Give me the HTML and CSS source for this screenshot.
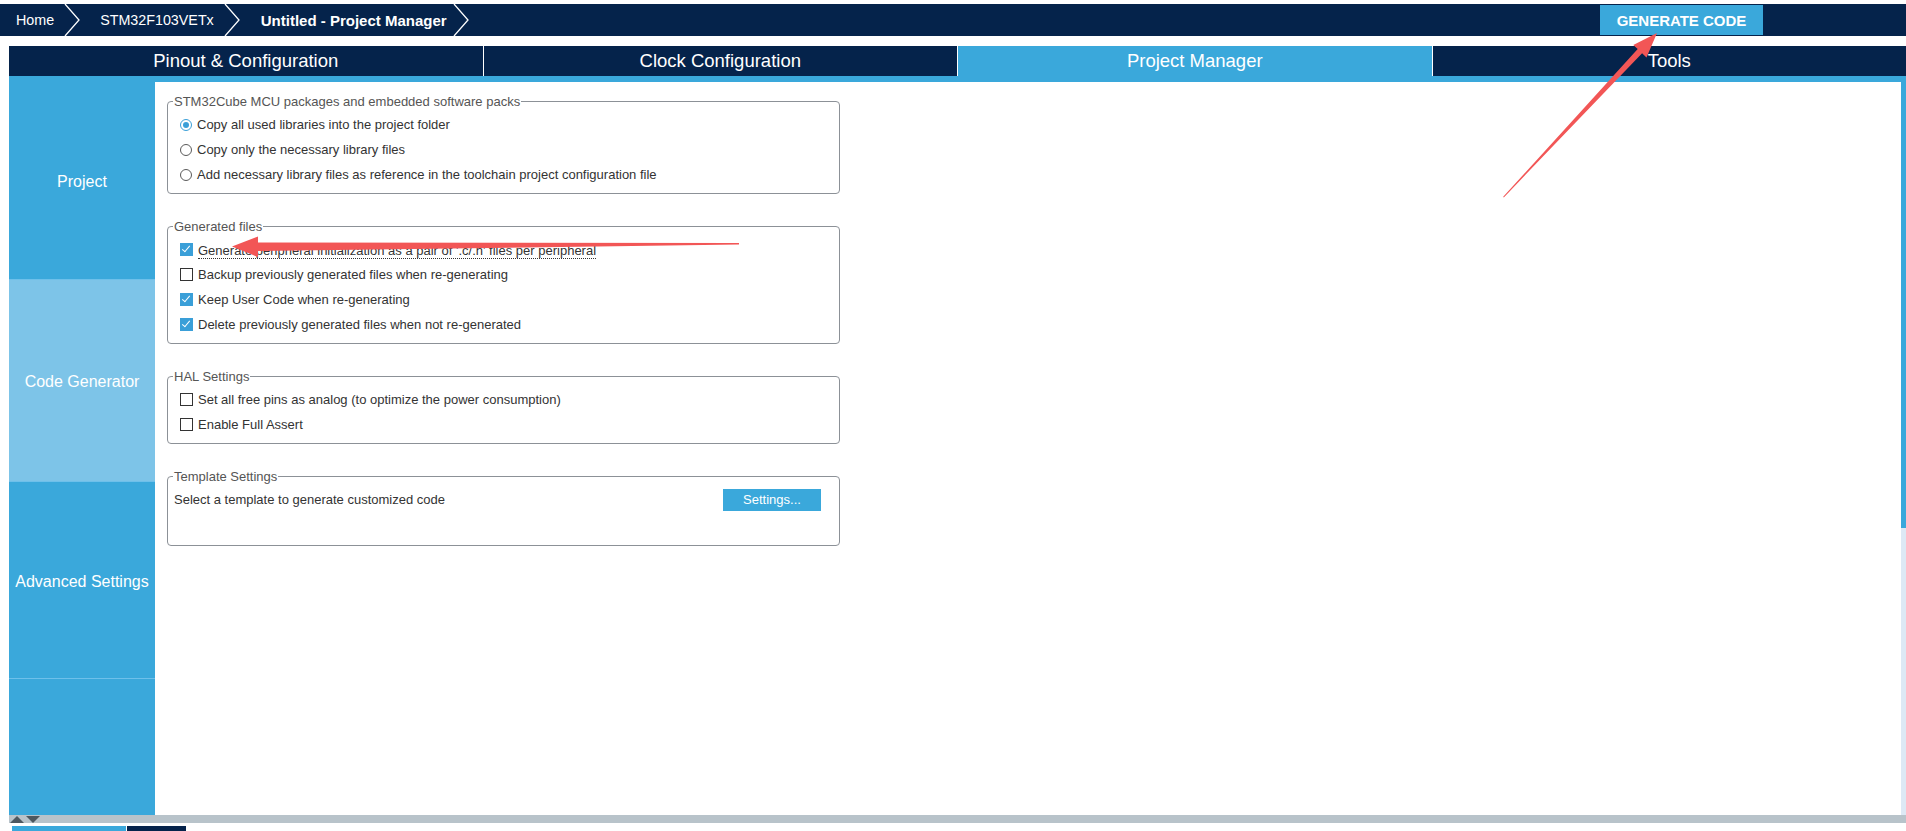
FILE: index.html
```html
<!DOCTYPE html>
<html>
<head>
<meta charset="UTF-8">
<title>Untitled - Project Manager</title>
<link rel="stylesheet" href="styles.css">
</head>
<body>

<!-- breadcrumb bar -->
<div class="topbar">
  <div class="crumb">Home<svg class="chev" width="17" height="32" viewBox="0 0 17 32"><polyline points="1,0 15,16 1,32"/></svg></div>
  <div class="crumb">STM32F103VETx<svg class="chev" width="17" height="32" viewBox="0 0 17 32"><polyline points="1,0 15,16 1,32"/></svg></div>
  <div class="crumb current">Untitled - Project Manager<svg class="chev" width="17" height="32" viewBox="0 0 17 32"><polyline points="1,0 15,16 1,32"/></svg></div>
  <div class="generate">GENERATE CODE</div>
</div>

<!-- main tabs -->
<div class="tabs">
  <div class="tab">Pinout &amp; Configuration</div>
  <div class="tab">Clock Configuration</div>
  <div class="tab active">Project Manager</div>
  <div class="tab">Tools</div>
</div>
<div class="strip"></div>

<div class="main">
  <div class="sidebar">
    <div class="side-item s1">Project</div>
    <div class="side-item s2 selected">Code Generator</div>
    <div class="side-item s3">Advanced Settings</div>
    <div class="side-item s4"></div>
  </div>

  <div class="content">
    <fieldset class="group">
      <legend>STM32Cube MCU packages and embedded software packs</legend>
      <div class="row"><span class="radio on"></span>Copy all used libraries into the project folder</div>
      <div class="row"><span class="radio"></span>Copy only the necessary library files</div>
      <div class="row"><span class="radio"></span>Add necessary library files as reference in the toolchain project configuration file</div>
    </fieldset>

    <fieldset class="group">
      <legend>Generated files</legend>
      <div class="row"><span class="check on"></span><span class="focused">Generate peripheral initialization as a pair of '.c/.h' files per peripheral</span></div>
      <div class="row"><span class="check"></span>Backup previously generated files when re-generating</div>
      <div class="row"><span class="check on"></span>Keep User Code when re-generating</div>
      <div class="row"><span class="check on"></span>Delete previously generated files when not re-generated</div>
    </fieldset>

    <fieldset class="group">
      <legend>HAL Settings</legend>
      <div class="row"><span class="check"></span>Set all free pins as analog (to optimize the power consumption)</div>
      <div class="row"><span class="check"></span>Enable Full Assert</div>
    </fieldset>

    <fieldset class="group template">
      <legend>Template Settings</legend>
      <div class="row tpl-row">
        <span>Select a template to generate customized code</span>
        <div class="btn">Settings...</div>
      </div>
    </fieldset>
  </div>

  <div class="vscroll"><div class="thumb"></div></div>
</div>

<div class="statusbar">
  <svg width="32" height="8" viewBox="0 0 32 8"><polygon points="1,8 8,1 15,8"/><polygon points="17,1 31,1 24,8"/></svg>
</div>
<div class="bottom-tabs">
  <div class="btab blue"></div>
  <div class="btab navy"></div>
</div>

<!-- red annotation arrows drawn over the screenshot -->
<svg class="marks" width="1906" height="831" viewBox="0 0 1906 831">
  <polygon points="1657,33 1646.5,57.4 1642.1,53.3 1503.8,197.4 1503.2,196.8 1637.7,49.1 1633.3,45"/>
  <polygon points="232,246.5 258,236.5 258,242.5 739,243 739,244.6 258,251 258,257"/>
</svg>

</body>
</html>
```

FILE: styles.css
```css
body { margin: 0; font-family: "Liberation Sans", Arial, sans-serif; background: #fff; color: #333; position: relative; width: 1906px; height: 831px; overflow: hidden; }

/* top breadcrumb bar */
.topbar { margin-top: 4px; height: 32px; background: #05234b; display: flex; align-items: center; color: #fff; font-size: 14.3px; }
.crumb { display: flex; align-items: center; height: 32px; padding-left: 19px; }
.crumb:first-child { padding-left: 16px; }
.crumb .chev { margin-left: 10px; }
.crumb.current { font-weight: bold; font-size: 15px; padding-left: 20px; }
.crumb.current .chev { margin-left: 6px; }
.chev polyline { fill: none; stroke: #fff; stroke-width: 1.3; }
.generate { margin-left: auto; margin-right: 143px; width: 163px; height: 30px; background: #3aa8db; font-weight: bold; font-size: 15px; display: flex; align-items: center; justify-content: center; }

/* main tabs */
.tabs { margin: 10px 0 0 9px; height: 30px; display: flex; gap: 1px; }
.tab { flex: 1; background: #05234b; color: #fff; font-size: 18.5px; display: flex; align-items: center; justify-content: center; }
.tab.active { background: #3aa8db; }
.strip { margin-left: 9px; height: 6px; background: #3aa8db; }

/* body */
.main { margin-left: 9px; height: 733px; display: flex; }
.sidebar { width: 146px; background: #3aa8db; display: flex; flex-direction: column; }
.side-item { color: #fff; font-size: 16px; display: flex; align-items: center; justify-content: center; border-bottom: 1px solid #6ec0ea; padding-top: 3px; }
.s1 { height: 194px; }
.s2 { height: 198px; }
.s3 { height: 193px; }
.s4 { flex: 1; border-bottom: none; }
.side-item.selected { background: #7dc4e8; }

.content { flex: 1; padding: 12px 0 0 12px; }
.vscroll { width: 5px; background: #dde9f5; }
.thumb { height: 446px; background: #3aa8db; }

/* groups */
.group { width: 671px; margin: 0 0 25px 0; padding: 3px 0 6px 0; border: 1px solid #8c9197; border-radius: 4px; font-size: 13px; }
.group legend { margin-left: 5px; padding: 0 1px; color: #555; font-size: 13px; line-height: 15px; }
.row { height: 25px; display: flex; align-items: center; padding-left: 12px; white-space: nowrap; }

.radio { width: 10px; height: 10px; border: 1px solid #5a5a5a; border-radius: 50%; margin-right: 5px; position: relative; background: #fff; }
.radio.on { border-color: #3a9fd8; }
.radio.on::after { content: ""; position: absolute; left: 2px; top: 2px; width: 6px; height: 6px; border-radius: 50%; background: #3a9fd8; }

.check { width: 11px; height: 11px; border: 1px solid #333; margin-right: 5px; background: #fff; position: relative; }
.check.on { background: #3a9fd8; border-color: #3a9fd8; }
.check.on::after { content: ""; position: absolute; left: 3px; top: 0px; width: 3px; height: 7px; border: solid #fff; border-width: 0 1.5px 1.5px 0; transform: rotate(40deg); }

.focused { border-bottom: 1px dotted #333; line-height: 15px; margin-top: 2px; }

.template { padding-bottom: 33px; }
.tpl-row { justify-content: space-between; padding-left: 6px; padding-right: 18px; }
.btn { width: 98px; height: 22px; background: #3aa8db; color: #fff; display: flex; align-items: center; justify-content: center; font-size: 13px; }

/* bottom */
.statusbar { margin-left: 9px; height: 8px; background: #b8c3ca; display: flex; }
.statusbar svg polygon { fill: #4d5860; }
.bottom-tabs { margin: 3px 0 0 12px; height: 5px; display: flex; gap: 1px; }
.btab.blue { width: 114px; background: #3aa8db; }
.btab.navy { width: 59px; background: #05234b; }

.marks { position: absolute; left: 0; top: 0; pointer-events: none; }
.marks polygon { fill: #f25656; }
```
